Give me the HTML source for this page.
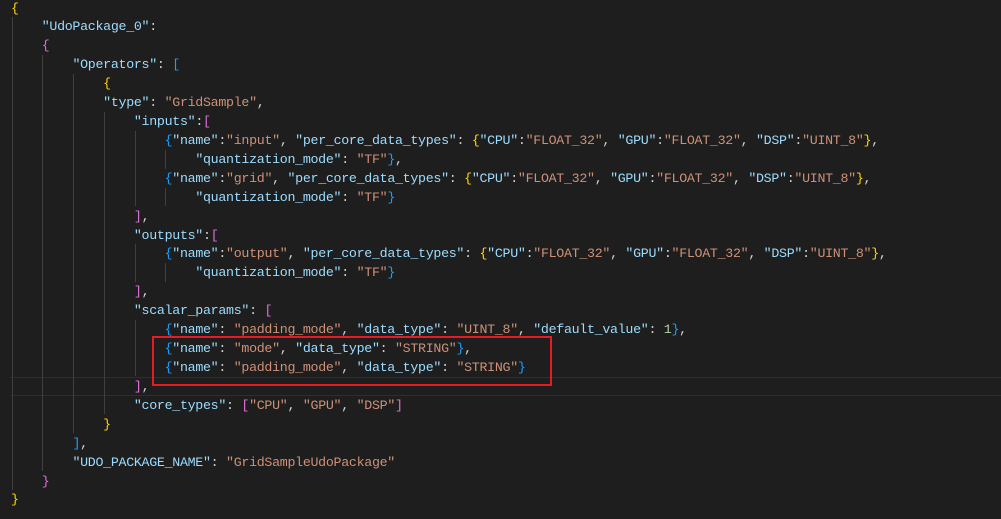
<!DOCTYPE html>
<html><head><meta charset="utf-8"><style>
html,body{margin:0;padding:0;background:#1e1e1e;width:1001px;height:519px;overflow:hidden}
#c{position:absolute;left:11px;top:-0.5px;font-family:"Liberation Mono",monospace;font-size:13.3px;letter-spacing:-0.3px;line-height:18.92px;color:#d4d4d4;white-space:pre}
.k{color:#9cdcfe}.s{color:#ce9178}.n{color:#b5cea8}
.g{color:#ffd700}.p{color:#da70d6}.b{color:#179fff}
.gd{position:absolute;width:1px;background:#404040}
.cur{position:absolute;left:10px;width:991px;top:377px;height:17px;border-top:1px solid #2e2e2e;border-bottom:1px solid #2e2e2e}
.box{position:absolute;left:152px;top:336px;width:396px;height:46px;border:2px solid #e51c23}
</style></head><body>
<div class="cur"></div>
<div id="c"><span class="g">{</span>
    <span class="k">"UdoPackage_0"</span>:
    <span class="p">{</span>
        <span class="k">"Operators"</span>: <span class="b">[</span>
            <span class="g">{</span>
            <span class="k">"type"</span>: <span class="s">"GridSample"</span>,
                <span class="k">"inputs"</span>:<span class="p">[</span>
                    <span class="b">{</span><span class="k">"name"</span>:<span class="s">"input"</span>, <span class="k">"per_core_data_types"</span>: <span class="g">{</span><span class="k">"CPU"</span>:<span class="s">"FLOAT_32"</span>, <span class="k">"GPU"</span>:<span class="s">"FLOAT_32"</span>, <span class="k">"DSP"</span>:<span class="s">"UINT_8"</span><span class="g">}</span>,
                        <span class="k">"quantization_mode"</span>: <span class="s">"TF"</span><span class="b">}</span>,
                    <span class="b">{</span><span class="k">"name"</span>:<span class="s">"grid"</span>, <span class="k">"per_core_data_types"</span>: <span class="g">{</span><span class="k">"CPU"</span>:<span class="s">"FLOAT_32"</span>, <span class="k">"GPU"</span>:<span class="s">"FLOAT_32"</span>, <span class="k">"DSP"</span>:<span class="s">"UINT_8"</span><span class="g">}</span>,
                        <span class="k">"quantization_mode"</span>: <span class="s">"TF"</span><span class="b">}</span>
                <span class="p">]</span>,
                <span class="k">"outputs"</span>:<span class="p">[</span>
                    <span class="b">{</span><span class="k">"name"</span>:<span class="s">"output"</span>, <span class="k">"per_core_data_types"</span>: <span class="g">{</span><span class="k">"CPU"</span>:<span class="s">"FLOAT_32"</span>, <span class="k">"GPU"</span>:<span class="s">"FLOAT_32"</span>, <span class="k">"DSP"</span>:<span class="s">"UINT_8"</span><span class="g">}</span>,
                        <span class="k">"quantization_mode"</span>: <span class="s">"TF"</span><span class="b">}</span>
                <span class="p">]</span>,
                <span class="k">"scalar_params"</span>: <span class="p">[</span>
                    <span class="b">{</span><span class="k">"name"</span>: <span class="s">"padding_mode"</span>, <span class="k">"data_type"</span>: <span class="s">"UINT_8"</span>, <span class="k">"default_value"</span>: <span class="n">1</span><span class="b">}</span>,
                    <span class="b">{</span><span class="k">"name"</span>: <span class="s">"mode"</span>, <span class="k">"data_type"</span>: <span class="s">"STRING"</span><span class="b">}</span>,
                    <span class="b">{</span><span class="k">"name"</span>: <span class="s">"padding_mode"</span>, <span class="k">"data_type"</span>: <span class="s">"STRING"</span><span class="b">}</span>
                <span class="p">]</span>,
                <span class="k">"core_types"</span>: <span class="p">[</span><span class="s">"CPU"</span>, <span class="s">"GPU"</span>, <span class="s">"DSP"</span><span class="p">]</span>
            <span class="g">}</span>
        <span class="b">]</span>,
        <span class="k">"UDO_PACKAGE_NAME"</span>: <span class="s">"GridSampleUdoPackage"</span>
    <span class="p">}</span>
<span class="g">}</span></div>
<div class="gd" style="left:12px;top:17.4px;height:472.5px"></div>
<div class="gd" style="left:42px;top:55.2px;height:415.8px"></div>
<div class="gd" style="left:73px;top:74.1px;height:359.1px"></div>
<div class="gd" style="left:104px;top:112px;height:302.4px"></div>
<div class="gd" style="left:135px;top:130.8px;height:75.6px"></div>
<div class="gd" style="left:135px;top:244.2px;height:37.8px"></div>
<div class="gd" style="left:135px;top:319.8px;height:56.7px"></div>
<div class="gd" style="left:165px;top:149.7px;height:18.9px"></div>
<div class="gd" style="left:165px;top:187.5px;height:18.9px"></div>
<div class="gd" style="left:165px;top:263.1px;height:18.9px"></div>
<div class="box"></div>
</body></html>
